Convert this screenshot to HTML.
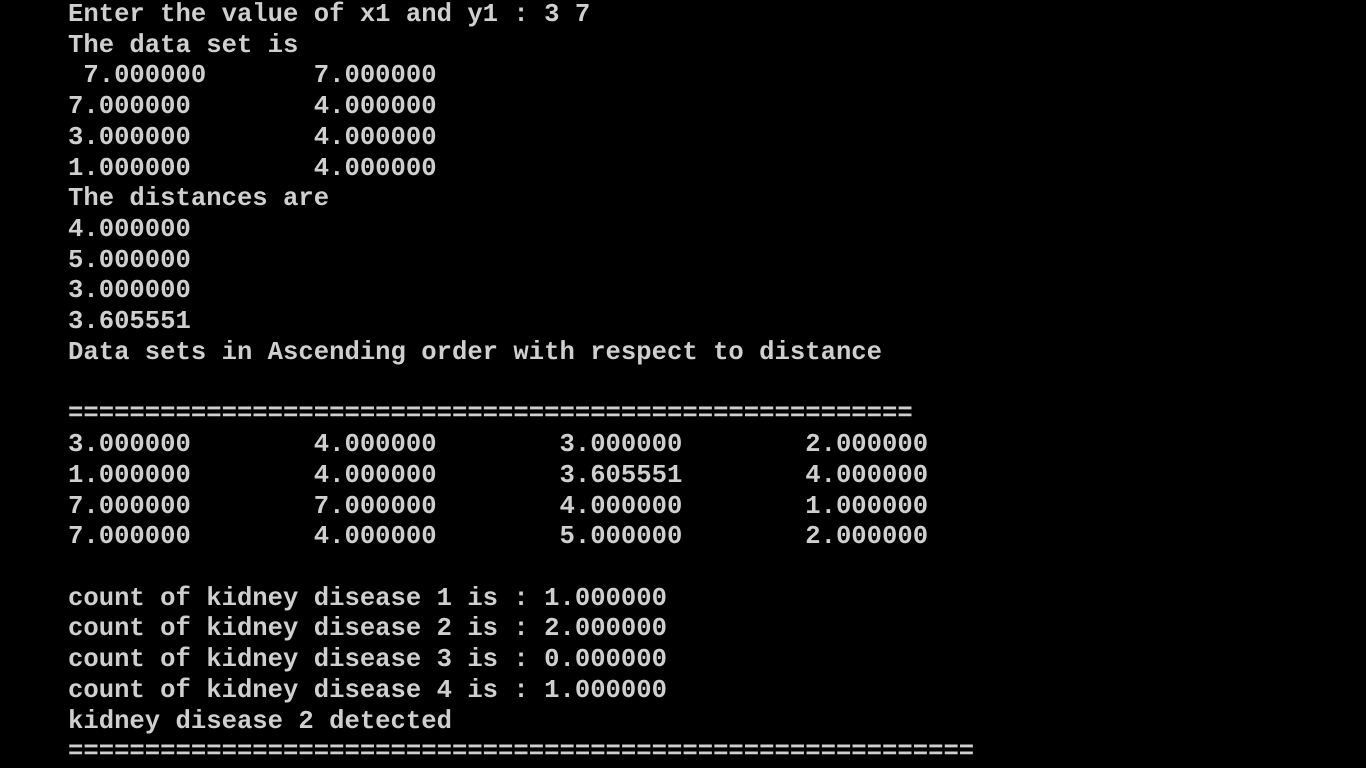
<!DOCTYPE html>
<html><head><meta charset="utf-8"><style>
html,body{margin:0;padding:0;background:#000;width:1366px;height:768px;overflow:hidden}
pre{margin:0;position:absolute;left:68px;top:0;font-family:"Liberation Mono","DejaVu Sans Mono",monospace;font-size:25.6px;line-height:30.72px;color:#cfcfcf;font-weight:bold;letter-spacing:0}
</style></head><body><pre>Enter the value of x1 and y1 : 3 7
The data set is
 7.000000       7.000000
7.000000        4.000000
3.000000        4.000000
1.000000        4.000000
The distances are
4.000000
5.000000
3.000000
3.605551
Data sets in Ascending order with respect to distance

=======================================================
3.000000        4.000000        3.000000        2.000000
1.000000        4.000000        3.605551        4.000000
7.000000        7.000000        4.000000        1.000000
7.000000        4.000000        5.000000        2.000000

count of kidney disease 1 is : 1.000000
count of kidney disease 2 is : 2.000000
count of kidney disease 3 is : 0.000000
count of kidney disease 4 is : 1.000000
kidney disease 2 detected
===========================================================</pre></body></html>
